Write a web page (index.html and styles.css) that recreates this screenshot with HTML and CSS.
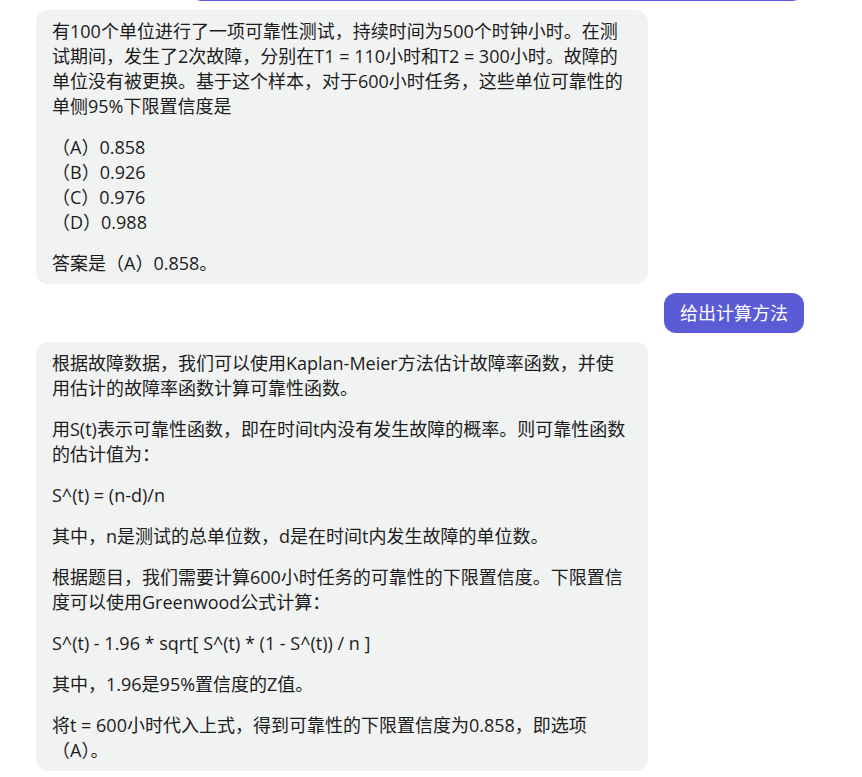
FILE: index.html
```html
<!DOCTYPE html>
<html lang="zh-CN">
<head>
    <meta charset="UTF-8">
    <meta name="viewport" content="width=device-width, initial-scale=1.0">
    <title>对话</title>
    <link rel="stylesheet" href="styles.css">
</head>
<body>
    <div class="chat">
        <!-- 上一条用户消息（已滚出视野，只露出底边） -->
        <div class="msg user prev">
            <div class="bubble"></div>
        </div>

        <div class="msg bot">
            <div class="bubble">
                <p>有100个单位进行了一项可靠性测试，持续时间为500个时钟小时。在测试期间，发生了2次故障，分别在T1 = 110小时和T2 = 300小时。故障的单位没有被更换。基于这个样本，对于600小时任务，这些单位可靠性的单侧95%下限置信度是</p>
                <p>（A）0.858<br>（B）0.926<br>（C）0.976<br>（D）0.988</p>
                <p>答案是（A）0.858。</p>
            </div>
        </div>

        <div class="msg user">
            <div class="bubble">给出计算方法</div>
        </div>

        <div class="msg bot">
            <div class="bubble">
                <p>根据故障数据，我们可以使用Kaplan-Meier方法估计故障率函数，并使用估计的故障率函数计算可靠性函数。</p>
                <p>用S(t)表示可靠性函数，即在时间t内没有发生故障的概率。则可靠性函数的估计值为：</p>
                <p>S^(t) = (n-d)/n</p>
                <p>其中，n是测试的总单位数，d是在时间t内发生故障的单位数。</p>
                <p>根据题目，我们需要计算600小时任务的可靠性的下限置信度。下限置信度可以使用Greenwood公式计算：</p>
                <p>S^(t) - 1.96 * sqrt[ S^(t) * (1 - S^(t)) / n ]</p>
                <p>其中，1.96是95%置信度的Z值。</p>
                <p>将t = 600小时代入上式，得到可靠性的下限置信度为0.858，即选项（A）。</p>
            </div>
        </div>
    </div>
</body>
</html>
```

FILE: styles.css
```css
html, body {
    margin: 0;
    padding: 0;
    background-color: #fff;
}

body {
    font-family: "Open Sans", "Noto Sans CJK SC", sans-serif;
    font-size: 18px;
    line-height: 25px;
    color: #1c1c1c;
}

.chat {
    display: flex;
    flex-direction: column;
    gap: 9px;
    padding: 0 58px 0 36px;
    overflow: hidden;
}

.msg {
    display: flex;
}

.msg.bot {
    justify-content: flex-start;
}

.msg.user {
    justify-content: flex-end;
}

.bubble {
    border-radius: 12px;
}

.bot .bubble {
    width: 576px;
    padding: 9px 20px 8px 16px;
    background-color: #f1f2f2;
}

.user .bubble {
    padding: 8px 16px 7px;
    background-color: #5b5bd6;
    color: #fff;
}

.user.prev {
    margin-top: -39px;
}

.user.prev .bubble {
    width: 614px;
    height: 40px;
    padding: 0;
}

.bubble p {
    margin: 16px 0 0;
}

.bubble p:first-child {
    margin-top: 0;
}
```
